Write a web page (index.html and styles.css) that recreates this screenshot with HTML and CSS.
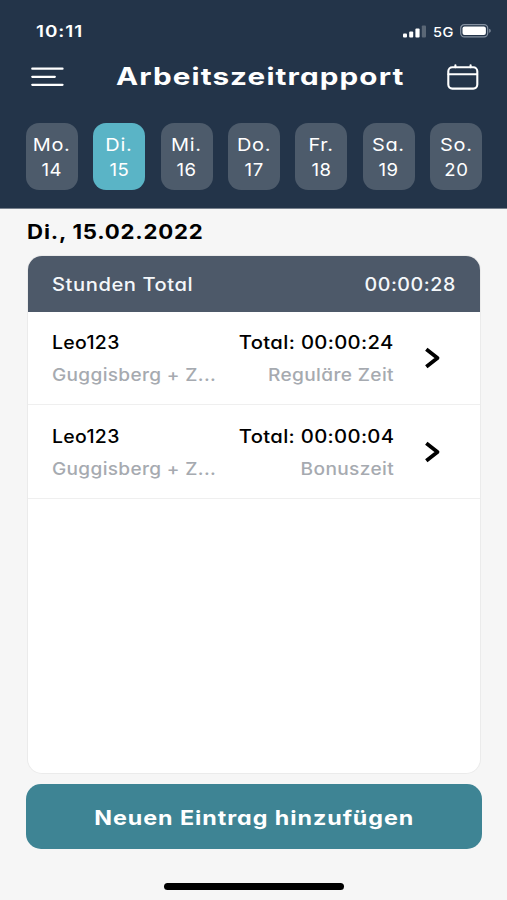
FILE: index.html
```
<!DOCTYPE html>
<html lang="de">
<head>
    <meta charset="UTF-8">
    <meta name="viewport" content="width=device-width, initial-scale=1.0">
    <title>Arbeitszeitrapport</title>
    <link rel="stylesheet" href="styles.css">
</head>
<body>
    <header class="header">
        <div class="status-bar">
            <span class="time">10:11</span>
            <div class="status-icons">
                <svg class="signal" width="24" height="13" viewBox="0 0 24 13" fill="#fff">
                    <rect x="0" y="8.5" width="4" height="4" rx="1"/>
                    <rect x="6.2" y="6.5" width="4" height="6" rx="1"/>
                    <rect x="12.4" y="3.5" width="4.2" height="9" rx="1"/>
                    <rect x="18.8" y="0.5" width="4.2" height="12" rx="1" opacity="0.25"/>
                </svg>
                <span class="network">5G</span>
                <svg class="battery" width="32" height="14" viewBox="0 0 32 14">
                    <rect x="0.7" y="0.7" width="27" height="12.2" rx="3.6" fill="none" stroke="#8490a0" stroke-width="1.2"/>
                    <rect x="2.5" y="2.5" width="23.4" height="8.6" rx="2" fill="#fff"/>
                    <path d="M29.2 4.8c2 .5 2 3.5 0 4z" fill="#8490a0"/>
                </svg>
            </div>
        </div>

        <div class="title-bar">
            <svg class="menu-icon" width="34" height="22" viewBox="0 0 34 22" fill="none" stroke="#fff" stroke-width="2.3" stroke-linecap="round">
                <path d="M2.3 2.7h30.200M2.3 10.800h22.500M2.3 18.800h30.200"/>
            </svg>
            <h1 class="title">Arbeitszeitrapport</h1>
            <svg class="calendar-icon" width="32" height="26" viewBox="0 0 32 26" fill="none" stroke="#fff" stroke-width="2.1" stroke-linecap="round">
                <rect x="1.3" y="3.2" width="29" height="21.4" rx="4"/>
                <path d="M1.5 10.2h28.600M8.4 1.2v2M23.6 1.2v2"/>
            </svg>
        </div>

        <nav class="days">
            <div class="day"><span>Mo.</span><span>14</span></div>
            <div class="day active"><span>Di.</span><span>15</span></div>
            <div class="day"><span>Mi.</span><span>16</span></div>
            <div class="day"><span>Do.</span><span>17</span></div>
            <div class="day"><span>Fr.</span><span>18</span></div>
            <div class="day"><span>Sa.</span><span>19</span></div>
            <div class="day"><span>So.</span><span>20</span></div>
        </nav>
    </header>

    <main class="content">
        <h2 class="date">Di., 15.02.2022</h2>

        <section class="card">
            <div class="card-header">
                <span class="card-label">Stunden Total</span>
                <span class="card-total">00:00:28</span>
            </div>

            <div class="entry">
                <div class="entry-info">
                    <span class="entry-name">Leo123</span>
                    <span class="entry-client">Guggisberg + Z...</span>
                </div>
                <div class="entry-time">
                    <span class="entry-total">Total: 00:00:24</span>
                    <span class="entry-type">Reguläre Zeit</span>
                </div>
                <svg class="chevron" width="16" height="22" viewBox="0 0 16 22" fill="none" stroke="#000" stroke-width="3.8" stroke-linejoin="round">
                    <path d="M1.3 2.3L12.5 11L1.3 19.7"/>
                </svg>
            </div>

            <div class="entry">
                <div class="entry-info">
                    <span class="entry-name">Leo123</span>
                    <span class="entry-client">Guggisberg + Z...</span>
                </div>
                <div class="entry-time">
                    <span class="entry-total">Total: 00:00:04</span>
                    <span class="entry-type">Bonuszeit</span>
                </div>
                <svg class="chevron" width="16" height="22" viewBox="0 0 16 22" fill="none" stroke="#000" stroke-width="3.8" stroke-linejoin="round">
                    <path d="M1.3 2.3L12.5 11L1.3 19.7"/>
                </svg>
            </div>
        </section>

        <button class="add-btn" type="button"><span class="add-label">Neuen Eintrag hinzufügen</span></button>
        <div class="home-indicator"></div>
    </main>
</body>
</html>
```
FILE: styles.css
```
* {
    margin: 0;
    padding: 0;
    box-sizing: border-box;
}

body {
    font-family: Inter, sans-serif;
    font-feature-settings: "cv11";
    background: #f6f6f6;
    height: 900px;
    display: flex;
    flex-direction: column;
    overflow: hidden;
}

.header {
    height: 209px;
    background: #233449;
    color: #fff;
    border-bottom: 1px solid #77818d;
}

.status-bar {
    height: 62px;
    padding: 0 15px 0 36px;
    display: flex;
    align-items: center;
    justify-content: space-between;
}

.time {
    font-size: 16px;
    font-weight: 600;
    letter-spacing: 0.8px;
    transform: scaleX(1.18);
    transform-origin: left;
}

.status-icons {
    display: flex;
    align-items: center;
}

.network {
    font-size: 13.5px;
    font-weight: 500;
    letter-spacing: 0.5px;
    margin: 1px 8px 0 6px;
    transform: scaleX(1.08);
    transform-origin: left;
}

.title-bar {
    height: 30px;
    padding: 0 28px 0 30px;
    display: flex;
    align-items: center;
    justify-content: space-between;
}

/* wide lettering */
.title {
    font-size: 24px;
    line-height: 30px;
    font-weight: 700;
    letter-spacing: 0.9px;
    white-space: nowrap;
    transform: translateX(4.5px) scaleX(1.235);
}

.days {
    display: flex;
    justify-content: space-between;
    padding: 31px 25px 0 26px;
}

.day {
    width: 52px;
    height: 67px;
    padding-top: 9px;
    border-radius: 13px;
    background: #4d5b6b;
    display: flex;
    flex-direction: column;
    align-items: center;
    font-size: 17.5px;
    line-height: 25px;
    letter-spacing: 0.6px;
}

.day span {
    transform: scaleX(1.14);
}

.day span:last-child {
    transform: scaleX(1.06);
}

.day.active {
    background: #5ab4c6;
}

.content {
    flex: 1;
    display: flex;
    flex-direction: column;
    padding: 0 25px 10px 26px;
}

.date {
    height: 47px;
    padding-left: 1px;
    font-size: 20px;
    line-height: 46px;
    font-weight: 700;
    letter-spacing: 0.7px;
    color: #000;
    transform: scaleX(1.11);
    transform-origin: left;
}

.card {
    height: 517px;
    margin: 0 2px;
    background: #fff;
    border-radius: 14px;
    box-shadow: 0 0 0 1px #ebebeb;
    overflow: hidden;
}

.card-header {
    height: 56px;
    padding: 0 24px;
    display: flex;
    align-items: center;
    justify-content: space-between;
    background: #4d5969;
    color: #f4f7fa;
    font-size: 18px;
    font-weight: 500;
    letter-spacing: 0.5px;
}

.card-label {
    transform: scaleX(1.12);
    transform-origin: left;
}

.card-total {
    transform: scaleX(1.09);
    transform-origin: right;
}

.entry {
    height: 93px;
    padding: 14px 39px 0 24px;
    display: flex;
    border-bottom: 1px solid #efefef;
    font-size: 18px;
    line-height: 33px;
    letter-spacing: 0.3px;
    white-space: nowrap;
}

.entry + .entry {
    height: 94px;
    padding-top: 15px;
}

.entry-info,
.entry-time {
    display: flex;
    flex-direction: column;
    align-items: flex-start;
}

.entry-info span {
    transform: scaleX(1.12);
    transform-origin: left;
}

.entry-info .entry-name {
    transform: scaleX(1.08);
}

.entry-time {
    width: 178px;
    align-items: flex-end;
    margin-left: auto;
}

.entry-time span {
    transform: scaleX(1.125);
    transform-origin: right;
}

.entry-name,
.entry-total {
    font-weight: 500;
    color: #000;
}

.entry-client,
.entry-type {
    color: #a6aab0;
    font-size: 17px;
    font-weight: 500;
}

.chevron {
    margin: 21px 0 0 31px;
}

.add-btn {
    height: 65px;
    margin-top: 11px;
    padding-top: 2px;
    border: none;
    border-radius: 15px;
    background: #3e8494;
    color: #fff;
    font-family: inherit;
    font-feature-settings: inherit;
    font-size: 20px;
    font-weight: 700;
    letter-spacing: 0.8px;
}

.add-label {
    display: inline-block;
    transform: scaleX(1.165);
}

.home-indicator {
    width: 180px;
    height: 7px;
    margin: auto auto 0;
    border-radius: 4px;
    background: #000;
}
```
